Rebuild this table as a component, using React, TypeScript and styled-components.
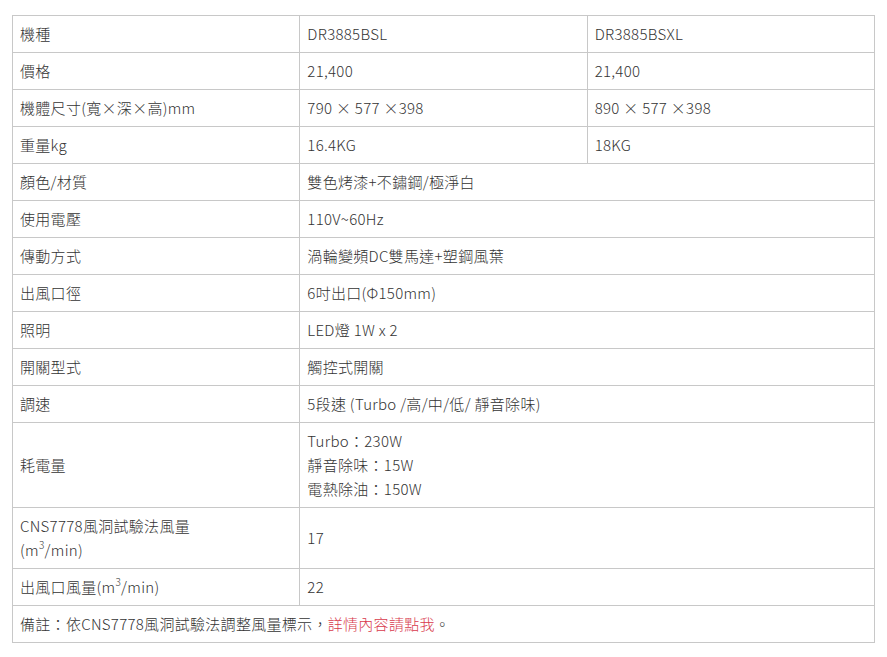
import React from "react";
import styled, { createGlobalStyle } from "styled-components";

const GlobalStyle = createGlobalStyle`
  body {
    margin: 0;
    background: #fff;
    font-family: "Noto Sans CJK TC", "Noto Sans", sans-serif;
    color: #333;
  }
`;

const Wrapper = styled.div`
  padding: 15px 12px;
`;

const SpecTable = styled.table`
  width: 100%;
  border-collapse: collapse;
  table-layout: fixed;
  font-size: 15px;
  font-weight: 300;
  letter-spacing: 0.3px;
  line-height: 24px;
`;

const Cell = styled.td`
  border: 1px solid #c8c8c8;
  padding: 6px 7px;
  vertical-align: middle;
  text-align: left;
  color: #333;
`;

const Link = styled.a`
  color: #d83a4c;
  text-decoration: none;
`;

const Sup = styled.sup`
  font-size: 10px;
  line-height: 0;
  vertical-align: 7px;
`;

interface Row {
  label: React.ReactNode;
  values: React.ReactNode[];
}

const m3 = (
  <>
    m<Sup>3</Sup>/min
  </>
);

const rows: Row[] = [
  { label: "機種", values: ["DR3885BSL", "DR3885BSXL"] },
  { label: "價格", values: ["21,400", "21,400"] },
  { label: "機體尺寸(寬×深×高)mm", values: ["790 × 577 ×398", "890 × 577 ×398"] },
  { label: "重量kg", values: ["16.4KG", "18KG"] },
  { label: "顏色/材質", values: ["雙色烤漆+不鏽鋼/極淨白"] },
  { label: "使用電壓", values: ["110V~60Hz"] },
  { label: "傳動方式", values: ["渦輪變頻DC雙馬達+塑鋼風葉"] },
  { label: "出風口徑", values: ["6吋出口(Φ150mm)"] },
  { label: "照明", values: ["LED燈 1W x 2"] },
  { label: "開關型式", values: ["觸控式開關"] },
  { label: "調速", values: ["5段速 (Turbo /高/中/低/ 靜音除味)"] },
  {
    label: "耗電量",
    values: [
      <>
        Turbo：230W
        <br />
        靜音除味：15W
        <br />
        電熱除油：150W
      </>,
    ],
  },
  {
    label: (
      <>
        CNS7778風洞試驗法風量
        <br />({m3})
      </>
    ),
    values: ["17"],
  },
  { label: <>出風口風量({m3})</>, values: ["22"] },
];

export default function App() {
  return (
    <>
      <GlobalStyle />
      <Wrapper>
        <SpecTable>
          <tbody>
            {rows.map((row, i) => (
              <tr key={i}>
                <Cell>{row.label}</Cell>
                {row.values.length === 1 ? (
                  <Cell colSpan={2}>{row.values[0]}</Cell>
                ) : (
                  row.values.map((v, j) => <Cell key={j}>{v}</Cell>)
                )}
              </tr>
            ))}
            <tr>
              <Cell colSpan={3}>
                備註：依CNS7778風洞試驗法調整風量標示，<Link href="#">詳情內容請點我</Link>。
              </Cell>
            </tr>
          </tbody>
        </SpecTable>
      </Wrapper>
    </>
  );
}
